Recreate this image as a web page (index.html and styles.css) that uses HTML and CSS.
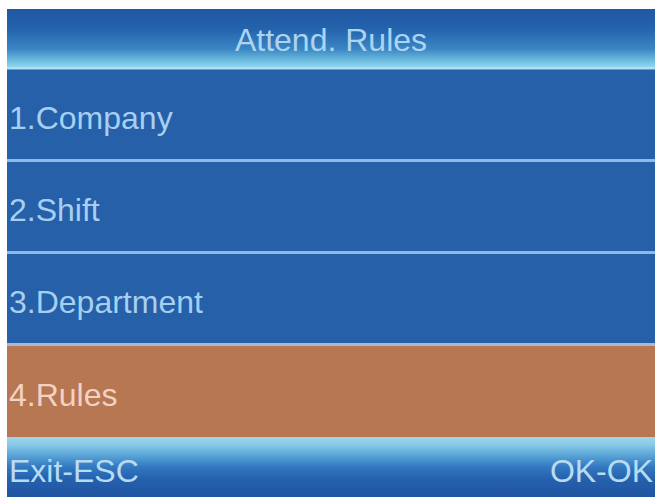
FILE: index.html
```html
<!DOCTYPE html>
<html>
<head>
<meta charset="utf-8">
<link rel="stylesheet" href="styles.css">
</head>
<body>
<div class="screen">
  <div class="header">Attend. Rules</div>
  <div class="row">1.Company</div>
  <div class="row">2.Shift</div>
  <div class="row">3.Department</div>
  <div class="row selected">4.Rules</div>
  <div class="footer">
    <span>Exit-ESC</span>
    <span>OK-OK</span>
  </div>
</div>
</body>
</html>
```
FILE: styles.css
```css
html, body {
  margin: 0;
  padding: 0;
  background: #ffffff;
}
body {
  padding: 9px 7px 7px 7px;
  font-family: "Liberation Sans", Arial, sans-serif;
}
.screen {
  display: flex;
  flex-direction: column;
  height: 488px;
  background: #2560a8;
}
.header {
  height: 61px;
  box-sizing: border-box;
  display: flex;
  justify-content: center;
  align-items: flex-start;
  padding-top: 13px;
  font-size: 32px;
  color: #acd4f0;
  background: linear-gradient(to bottom,
    #2158a2 0px,
    #2463ad 20px,
    #3a86c4 40px,
    #6fbee0 52px,
    #8fd6ee 58px,
    #c4ecf8 59px,
    #98d6ec 60px,
    #2a66b0 61px);
}
.row {
  height: 83px;
  padding: 6px 0 0 2px;
  border-bottom: 3px solid #8cb9e8;
  display: flex;
  align-items: center;
  font-size: 32px;
  line-height: 1;
  color: #a7cff1;
  background: #2560a8;
}
.row:nth-of-type(4) {
  border-bottom-color: #a9b8cc;
}
.row.selected {
  height: 85px;
  border-bottom: none;
  background: #b77752;
  color: #f3d2c2;
}
.footer {
  flex: 1;
  display: flex;
  justify-content: space-between;
  align-items: center;
  padding: 8px 2px 0 2px;
  font-size: 32px;
  color: #b7dcf2;
  background: linear-gradient(to bottom,
    #9ed6ea 0px,
    #86c9e6 8px,
    #5aa6d8 18px,
    #3278c0 30px,
    #2661ae 42px,
    #1f54a0 60px);
}
```
